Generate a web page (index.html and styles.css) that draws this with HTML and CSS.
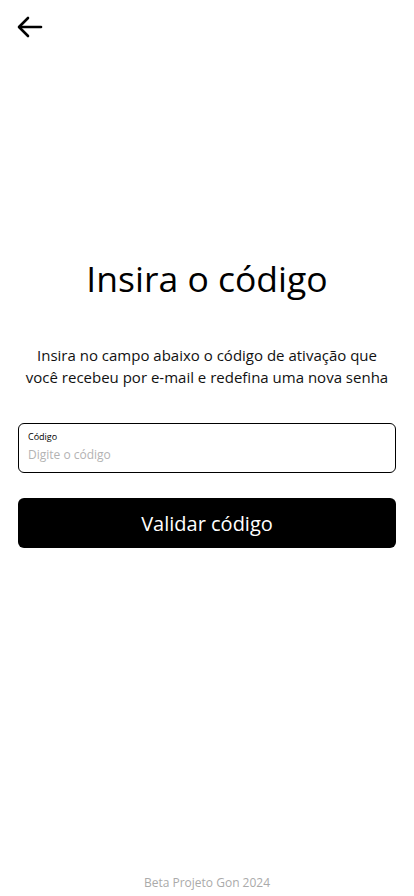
FILE: index.html
```html
<!DOCTYPE html>
<html lang="pt-BR">
<head>
<meta charset="utf-8">
<title>Insira o código</title>
<link rel="stylesheet" href="styles.css">
</head>
<body>
<div class="page">
  <header class="topbar">
    <button class="back" aria-label="Voltar">
      <svg width="26" height="22" viewBox="0 0 26 22" fill="none" stroke="#000" stroke-width="2.6" stroke-linecap="round" stroke-linejoin="round">
        <path d="M24 11H2.5"/>
        <path d="M11 2L2 11l9 9"/>
      </svg>
    </button>
  </header>
  <main class="content">
    <h1 class="title">Insira o código</h1>
    <p class="desc">Insira no campo abaixo o código de ativação que você recebeu por e-mail e redefina uma nova senha</p>
    <label class="field">
      <span class="field-label">Código</span>
      <input class="field-input" type="text" placeholder="Digite o código">
    </label>
    <button class="submit">Validar código</button>
  </main>
  <footer class="footer">Beta Projeto Gon 2024</footer>
</div>
</body>
</html>
```

FILE: styles.css
```css
* { box-sizing: border-box; }
html, body { margin: 0; padding: 0; background: #fff; }
body { font-family: "Open Sans", "Noto Sans", sans-serif; color: #000; }
.page {
  height: 896px;
  display: flex;
  flex-direction: column;
}
.topbar {
  padding: 16px 0 0 17px;
  height: 40px;
}
.back {
  border: 0;
  background: none;
  padding: 0;
  display: block;
  cursor: pointer;
}
.content {
  flex: 1;
  display: flex;
  flex-direction: column;
  padding: 0 18px;
}
.title {
  margin: 214px 0 0;
  font-size: 35.5px;
  font-weight: 400;
  text-align: center;
  line-height: 48px;
}
.desc {
  margin: 42px 0 0;
  padding: 0 3px;
  font-size: 15px;
  line-height: 22px;
  text-align: center;
  color: #111;
}
.field {
  margin-top: 35px;
  height: 50px;
  border: 1px solid #000;
  border-radius: 6px;
  display: flex;
  flex-direction: column;
  padding: 6px 9px 0;
}
.field-label {
  font-size: 9px;
  line-height: 14px;
}
.field-input {
  border: 0;
  outline: none;
  padding: 0;
  margin-top: 3px;
  font-family: inherit;
  font-size: 12px;
  line-height: 16px;
  color: #000;
  background: transparent;
}
.field-input::placeholder { color: #b3b3b3; }
.submit {
  margin-top: 25px;
  height: 50px;
  border: 0;
  border-radius: 6px;
  background: #000;
  color: #fff;
  font-family: inherit;
  font-size: 20px;
  cursor: pointer;
}
.footer {
  text-align: center;
  font-size: 12px;
  color: #aaa;
  padding-bottom: 5px;
  line-height: 16px;
}
```
